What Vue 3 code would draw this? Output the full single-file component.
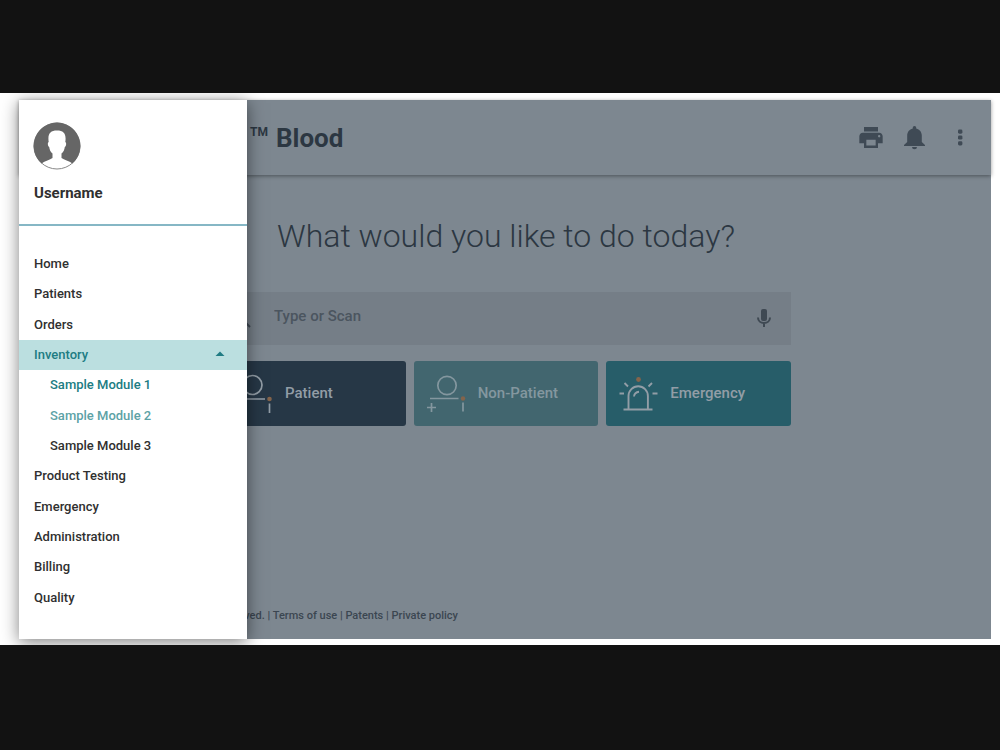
<script setup>
import { ref } from 'vue'

const query = ref('')
const before = ['Home', 'Patients', 'Orders']
const modules = [
  { name: 'Sample Module 1', state: 'active' },
  { name: 'Sample Module 2', state: 'hover' },
  { name: 'Sample Module 3', state: '' }
]
const after = ['Product Testing', 'Emergency', 'Administration', 'Billing', 'Quality']
const inventoryOpen = ref(true)
</script>

<template>
  <div class="stage">
    <div class="window">
      <div class="app">
        <header class="topbar">
          <h1 class="brand"><span class="tm">TM</span> Blood</h1>
          <div class="tools">
            <button type="button" aria-label="Print">
              <svg width="28" height="28" viewBox="0 0 24 24"><path d="M19 7.500H5c-1.66 0-3 1.34-3 3v6h4v4h12v-4h4v-6c0-1.660-1.340-3-3-3zm-3 11H8v-5h8v5zm3-7c-.55 0-1-.45-1-1s.45-1 1-1 1 .45 1 1-.45 1-1 1zm-1-9H6v4h12v-4z" /></svg>
            </button>
            <button type="button" aria-label="Notifications">
              <svg width="26" height="26" viewBox="0 0 26 26"><path d="M12.500 1c-1 0-1.700.8-1.700 1.700v.7C7.300 4.200 5.200 7 5.200 10.500V17L2 20v1h21v-1l-3.200-3v-6.500c0-3.500-2.100-6.300-5.600-7.100v-.7c0-.9-.7-1.700-1.700-1.700zM10 22a2.500 2.200 0 0 0 5 0z" /></svg>
            </button>
            <button type="button" aria-label="More options">
              <svg width="26" height="26" viewBox="0 0 26 26"><rect x="11" y="4.500" width="4.400" height="4.200" rx="1.400" /><rect x="11" y="10.400" width="4.400" height="4.200" rx="1.400" /><rect x="11" y="16.300" width="4.400" height="4.200" rx="1.400" /></svg>
            </button>
          </div>
        </header>

        <main class="main">
          <h2 class="question">What would you like to do today?</h2>
          <label class="search">
            <svg class="lens" width="24" height="24" viewBox="0 0 24 24"><circle cx="9" cy="9.500" r="5.500" fill="none" stroke="currentColor" stroke-width="2" /><path d="M13 14l6 6" stroke="currentColor" stroke-width="2" /></svg>
            <input v-model="query" type="text" placeholder="Type or Scan" aria-label="Type or Scan" />
            <button type="button" aria-label="Voice input">
              <svg width="24" height="24" viewBox="0 0 24 24"><rect x="9" y="2" width="6" height="12" rx="2" fill="currentColor" /><path d="M6 10.500c0 3.500 2.700 5.500 6 5.500s6-2 6-5.500M12 16v4" fill="none" stroke="currentColor" stroke-width="2" /></svg>
            </button>
          </label>
          <div class="actions">
            <button type="button" class="card patient">
              <svg width="44" height="44" viewBox="0 0 44 44" fill="none" stroke="currentColor" stroke-width="1.700"><circle cx="19.500" cy="14" r="9.500" /><path d="M3 28h29M36.500 32.500v9.500" /><circle cx="36.500" cy="28" r="2.300" class="dot" /></svg>
              <span>Patient</span>
            </button>
            <button type="button" class="card nonpatient">
              <svg width="44" height="44" viewBox="0 0 44 44" fill="none" stroke="currentColor" stroke-width="1.700"><circle cx="21" cy="14.500" r="9.200" /><path d="M4 27.500h28.500M37 31.500v9M1 36.500h9M5.500 32v9" /><circle cx="37" cy="27.500" r="2.200" class="dot" /></svg>
              <span>Non-Patient</span>
            </button>
            <button type="button" class="card emergency">
              <svg width="44" height="44" viewBox="0 0 44 44" fill="none" stroke="currentColor" stroke-width="1.900"><path d="M5.500 38.500h29M10.500 38.500V25a9.700 9.700 0 0 1 19.400 0v13.500M16 25.500c.3-2.500 2-4.500 5-4.800M1.500 22.500H6M34.500 22.500h5M6.500 12l3.500 3.500M34 12L30.500 15.500" /><circle cx="20.500" cy="8.500" r="2.400" class="dot" /></svg>
              <span>Emergency</span>
            </button>
          </div>
        </main>

        <footer class="footer">reserved. | <a href="#">Terms of use</a> | <a href="#">Patents</a> | <a href="#">Private policy</a></footer>
      </div>

      <aside class="drawer">
        <div class="profile">
          <svg class="avatar" width="48" height="48" viewBox="0 0 48 48">
            <circle cx="24" cy="24" r="23" fill="#fff" stroke="#888" stroke-width="1" />
            <path d="M8.500 41.500A23.400 23.400 0 1 1 39.500 41.500C36 39 31 37.500 28.500 36V31.500C30.500 30 31.500 27.500 31.800 25C33.500 24 33.500 20.500 32.300 20C33.500 12 31 8.500 24 8.500S14.500 12 15.700 20C14.500 20.500 14.500 24 16.200 25C16.500 27.500 17.500 30 19.500 31.500V36C17 37.500 12 39 8.500 41.500Z" fill="#666" />
          </svg>
          <div class="username">Username</div>
        </div>
        <nav class="nav">
          <ul class="list">
            <li v-for="item in before" :key="item"><a href="#">{{ item }}</a></li>
            <li class="group">
              <button type="button" class="toggle" :aria-expanded="inventoryOpen" @click="inventoryOpen = !inventoryOpen">
                Inventory
                <svg width="10" height="8" viewBox="0 0 10 8"><path d="M.5 5L5 .5L9.500 5z" fill="currentColor" /></svg>
              </button>
              <ul v-show="inventoryOpen" class="sublist">
                <li v-for="m in modules" :key="m.name"><a href="#" :class="m.state">{{ m.name }}</a></li>
              </ul>
            </li>
            <li v-for="item in after" :key="item"><a href="#">{{ item }}</a></li>
          </ul>
        </nav>
      </aside>
    </div>
  </div>
</template>

<style>
body {
  margin: 0;
  background: #121212;
}
</style>

<style scoped>
* {
  box-sizing: border-box;
}
.stage {
  margin: 93px 0 104px;
  padding: 7px 9px 6px 19px;
  background: #fff;
  overflow: hidden;
  font-family: Roboto, "Liberation Sans", sans-serif;
}
.window {
  position: relative;
}
button {
  font: inherit;
  border: 0;
  padding: 0;
  background: none;
  color: inherit;
}
a {
  color: inherit;
  text-decoration: none;
}
ul {
  list-style: none;
  margin: 0;
  padding: 0;
}
svg {
  display: block;
}
.app {
  display: flex;
  flex-direction: column;
  min-height: 539px;
  background: #7d8790;
  color: #2c3742;
}
.topbar {
  display: flex;
  align-items: center;
  justify-content: space-between;
  height: 75px;
  padding: 0 18px 0 231px;
  background: #7d8790;
  box-shadow: 0 1px 4px rgba(0, 0, 0, 0.4);
}
.brand {
  display: flex;
  gap: 8px;
  margin: 0;
  font-size: 26px;
  line-height: 32px;
  font-weight: 700;
}
.tm {
  font-size: 12px;
  line-height: 20px;
}
.tools {
  display: flex;
  align-items: center;
  gap: 17px;
}
.tools svg {
  fill: #3f4a55;
}
.tools button:last-child {
  margin-left: 2px;
}
.main {
  width: 572px;
  max-width: 100%;
  margin: 0 auto;
  padding-left: 2px;
  flex: 1;
}
.question {
  margin: 41px 0 36px;
  font-size: 32px;
  line-height: 40px;
  font-weight: 300;
  text-align: center;
  white-space: nowrap;
}
.search {
  display: flex;
  align-items: center;
  height: 53px;
  padding: 0 15px 0 10px;
  background: #757e87;
  color: #3f4953;
}
.search input {
  flex: 1;
  min-width: 0;
  margin-left: 19px;
  padding: 0 0 6px;
  border: 0;
  outline: 0;
  background: none;
  font: 500 15px/20px Roboto, "Liberation Sans", sans-serif;
  color: #4b555f;
}
.search input::placeholder {
  color: #4b555f;
  opacity: 1;
}
.actions {
  display: grid;
  grid-template-columns: repeat(3, 1fr);
  gap: 8px;
  margin-top: 16px;
}
.card {
  display: flex;
  align-items: center;
  gap: 8px;
  height: 65px;
  padding: 0 0 2px 12px;
  border-radius: 3px;
  font-size: 15px;
  line-height: 20px;
  font-weight: 500;
  color: #929da6;
}
.dot {
  fill: #84644b;
  stroke: none;
}
.patient {
  background: #263746;
}
.nonpatient {
  background: #42666f;
  color: #84979f;
}
.emergency {
  background: #275d69;
}
.footer {
  padding: 0 0 15px 200px;
  font-size: 11px;
  line-height: 16px;
  font-weight: 500;
  color: #3b4651;
}
.drawer {
  position: absolute;
  top: 0;
  bottom: 0;
  left: 0;
  width: 228px;
  display: flex;
  flex-direction: column;
  background: #fff;
  color: #303030;
  box-shadow: 0 3px 16px rgba(0, 0, 0, 0.5);
}
.profile {
  padding: 22px 14px 21px;
  border-bottom: 2px solid #86b7c5;
}
.username {
  margin: 13px 0 0 1px;
  font-size: 15px;
  line-height: 20px;
  font-weight: 700;
}
.nav {
  flex: 1;
  display: flex;
  padding: 23px 0 26px;
  font-size: 13px;
  line-height: 20px;
  font-weight: 500;
}
.list {
  flex: 1;
  display: grid;
  grid-template-rows: repeat(12, 1fr);
}
.list li a,
.toggle {
  display: flex;
  align-items: center;
  height: 100%;
  padding-left: 15px;
}
.group {
  grid-row: span 4;
  display: grid;
  grid-template-rows: 1fr 3fr;
}
.toggle {
  justify-content: space-between;
  padding-right: 22px;
  background: #bbdfe0;
  color: #207c83;
}
.sublist {
  display: grid;
  grid-template-rows: repeat(3, 1fr);
}
.sublist li a {
  padding-left: 31px;
}
.sublist .active {
  color: #207c83;
}
.sublist .hover {
  color: #5ca2a6;
}
</style>
